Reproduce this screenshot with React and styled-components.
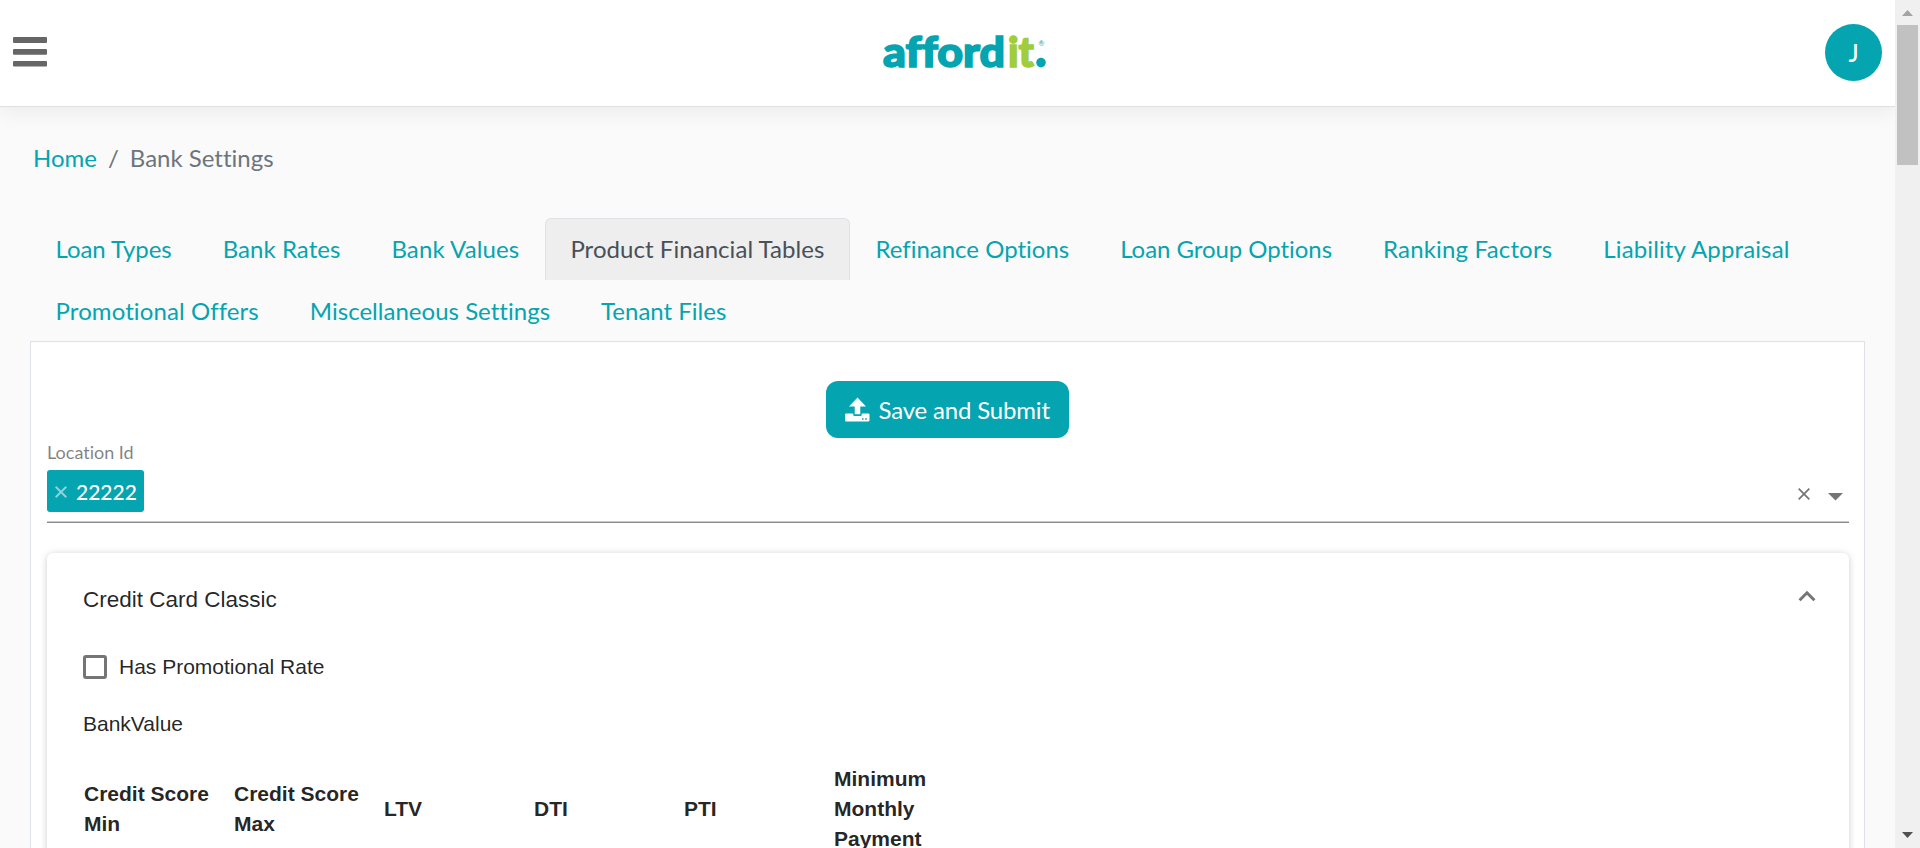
import React from "react";
import styled, { createGlobalStyle } from "styled-components";

const teal = "#04a4b0";

const Global = createGlobalStyle`
  *, *::before, *::after { box-sizing: border-box; }
  body {
    margin: 0;
    background: #fafafa;
    font-family: Lato, "Liberation Sans", sans-serif;
    font-size: 24px;
    line-height: 36px;
    font-variant-ligatures: none;
  }
`;

const Screen = styled.div`
  display: flex;
  height: 848px;
  overflow: hidden;
`;
const Page = styled.div`
  width: 1895px;
  height: 848px;
  overflow: hidden;
`;
const Header = styled.header`
  display: flex;
  align-items: flex-start;
  justify-content: space-between;
  height: 107px;
  padding: 0 13px;
  background: #fff;
  border-bottom: 1px solid #dfdfdf;
  box-shadow: 0 6px 18px rgba(0, 0, 0, 0.06);
`;
const MenuButton = styled.div`
  display: flex;
  width: 57px;
  padding-top: 37px;
`;
const Logo = styled.div`
  display: flex;
  width: 172px;
  height: 50px;
  margin: 24px 0 0 36px;
  svg { overflow: visible; }
`;
const Avatar = styled.div`
  width: 57px;
  height: 57px;
  margin-top: 24px;
  border-radius: 50%;
  background: ${teal};
  color: #fff;
  font-weight: 500;
  line-height: 58px;
  text-align: center;
`;
const Breadcrumb = styled.nav`
  display: flex;
  gap: 11px;
  margin: 33px 0 42px 33px;
  height: 36px;
  color: #6c757d;
  line-height: 36px;
`;
const Link = styled.a`
  color: ${teal};
`;
const Tabs = styled.div`
  display: flex;
  flex-wrap: wrap;
  margin: 0 30px;
  height: 123px;
`;
const Tab = styled.div`
  height: 62px;
  padding: 12px 24.5px;
  border: 1px solid ${(p) => (p.$active ? "#dee2e6" : "transparent")};
  border-bottom: 0;
  border-radius: 6px 6px 0 0;
  background: ${(p) => (p.$active ? "#eee" : "transparent")};
  color: ${(p) => (p.$active ? "#495057" : teal)};
  letter-spacing: ${(p) => p.$tracking}px;
  white-space: nowrap;
`;
const Panel = styled.section`
  display: flex;
  flex-direction: column;
  width: 1835px;
  height: 640px;
  margin-left: 30px;
  padding: 39px 15px 0 16px;
  border: 1px solid #dee2e6;
  background: #fff;
`;
const SubmitButton = styled.button`
  display: flex;
  align-items: center;
  align-self: center;
  gap: 9px;
  width: 243px;
  height: 57px;
  margin-right: 2px;
  padding: 0 0 0 19px;
  border: 0;
  border-radius: 12px;
  background: ${teal};
  color: #fff;
  font: 24px/36px Lato, sans-serif;
  letter-spacing: -0.18px;
  white-space: nowrap;
`;
const FieldLabel = styled.div`
  height: 27px;
  margin: 1px 0 4px;
  color: rgba(0, 0, 0, 0.5);
  font-size: 18px;
  line-height: 27px;
`;
const Select = styled.div`
  display: flex;
  justify-content: space-between;
  height: 53px;
  border-bottom: 1px solid #8c8c8c;
  box-shadow: inset 0 -1px #c9c9c9;
`;
const Chip = styled.div`
  display: flex;
  align-items: center;
  gap: 9px;
  width: 97px;
  height: 42px;
  padding: 2px 0 0 8px;
  border-radius: 3px;
  background: ${teal};
  color: #fff;
  font-size: 21px;
  font-weight: 500;
  line-height: 42px;
`;
const SelectIcons = styled.div`
  display: flex;
  gap: 18px;
  padding: 18px 6px 0 0;
`;
const Card = styled.article`
  height: 400px;
  margin-top: 30px;
  padding: 0 33px 0 36px;
  border-radius: 6px;
  background: #fff;
  box-shadow: 0 3px 1.5px -1.5px rgba(0, 0, 0, 0.1), 0 1px 7px rgba(0, 0, 0, 0.2);
  color: rgba(0, 0, 0, 0.87);
  font-family: "Liberation Sans", sans-serif;
  font-size: 21px;
  line-height: 30px;
`;
const CardHeader = styled.div`
  display: flex;
  justify-content: space-between;
  padding-top: 32px;
  height: 102px;
  font-size: 22.5px;
`;
const CheckRow = styled.label`
  display: flex;
  gap: 12px;
  height: 24px;
  line-height: 24px;
`;
const CheckBox = styled.span`
  width: 24px;
  height: 24px;
  border: 3px solid #757575;
  border-radius: 3px;
`;
const SectionTitle = styled.div`
  margin-top: 30px;
  height: 30px;
`;
const TableHead = styled.div`
  display: grid;
  grid-template-columns: repeat(6, 150px);
  align-items: center;
  height: 90px;
  margin: 25px 0 0 1px;
  font-weight: 700;
`;
const HeadCell = styled.div`
  padding-right: 20px;
`;
const Scrollbar = styled.div`
  display: flex;
  flex-direction: column;
  align-items: center;
  justify-content: space-between;
  width: 25px;
  height: 848px;
  padding: 10px 0;
  background: #f0f0f0;
`;
const Thumb = styled.div`
  width: 21px;
  height: 140px;
  margin: 9px 0 auto;
  background: #c1c1c1;
`;

const Cross = ({ size, color, width }) => (
  <svg width={size} height={size} viewBox="0 0 12 12">
    <path d="M.7.7l10.6 10.6M11.3.7L.7 11.3" stroke={color} strokeWidth={width} />
  </svg>
);

const tabs = [
  ["Loan Types", -0.06],
  ["Bank Rates", 0.05],
  ["Bank Values", 0.12],
  ["Product Financial Tables", 0.05],
  ["Refinance Options", 0],
  ["Loan Group Options", -0.05],
  ["Ranking Factors", 0.18],
  ["Liability Appraisal", 0.13],
  ["Promotional Offers", 0.1],
  ["Miscellaneous Settings", 0.02],
  ["Tenant Files", 0],
];
const columns = ["Credit Score Min", "Credit Score Max", "LTV", "DTI", "PTI", "Minimum Monthly Payment"];

export default function App() {
  return (
    <Screen>
      <Global />
      <Page>
        <Header>
          <MenuButton>
            <svg width="34" height="30" viewBox="0 0 34 30" fill="#666">
              <rect width="34" height="6" rx="1" />
              <rect y="12" width="34" height="5.7" rx="1" />
              <rect y="24" width="34" height="5.4" rx="1" />
            </svg>
          </MenuButton>
          <Logo>
            <svg width="172" height="50" viewBox="0 0 172 50" fontFamily="Lato" fontWeight="900" fontSize="42">
              <text x="3" y="42.5" fill={teal} stroke={teal} strokeWidth="1.6" textLength="122" lengthAdjust="spacingAndGlyphs">afford</text>
              <text x="128" y="42.5" fill="#a0cd3c" stroke="#a0cd3c" strokeWidth="1.6" textLength="26" lengthAdjust="spacingAndGlyphs">it</text>
              <circle cx="161" cy="38.6" r="4.8" fill={teal} />
              <text x="158.4" y="22" fill={teal} fontSize="7" fontWeight="400">®</text>
            </svg>
          </Logo>
          <Avatar>J</Avatar>
        </Header>
        <Breadcrumb>
          <Link>Home</Link>
          <span>/</span>
          <span>Bank Settings</span>
        </Breadcrumb>
        <Tabs>
          {tabs.map(([label, tracking]) => (
            <Tab key={label} $tracking={tracking} $active={label === "Product Financial Tables"}>{label}</Tab>
          ))}
        </Tabs>
        <Panel>
          <SubmitButton>
            <svg width="25" height="25" viewBox="0 0 25 25" fill="#fff">
              <path d="M12.5 0.5L21 9.4H15.3V17.2H9.7V9.4H4Z" />
              <path fillRule="evenodd" d="M1.2 16.5H8.2V17.5Q8.2 19 9.7 19H15.3Q16.8 19 16.8 17.5V16.5H23.3Q24.5 16.5 24.5 17.7V23.3Q24.5 24.5 23.3 24.5H1.2Q0 24.5 0 23.3V17.7Q0 16.5 1.2 16.5ZM17 21.2V22.8H18.6V21.2ZM20.2 21.2V22.8H21.8V21.2Z" />
            </svg>
            <span>Save and Submit</span>
          </SubmitButton>
          <FieldLabel>Location Id</FieldLabel>
          <Select>
            <Chip>
              <Cross size={12} color="#8cd3d9" width={2} />
              <span>22222</span>
            </Chip>
            <SelectIcons>
              <Cross size={12} color="#757575" width={1.7} />
              <svg width="15" height="16" viewBox="0 0 15 16"><path d="M0 5H15L7.5 12.5Z" fill="#757575" /></svg>
            </SelectIcons>
          </Select>
          <Card>
            <CardHeader>
              <span>Credit Card Classic</span>
              <svg width="18" height="24" viewBox="0 0 18 24"><path d="M1.6 15.2L9 7.8L16.4 15.2" fill="none" stroke="#757575" strokeWidth="3" /></svg>
            </CardHeader>
            <CheckRow><CheckBox /><span>Has Promotional Rate</span></CheckRow>
            <SectionTitle>BankValue</SectionTitle>
            <TableHead>
              {columns.map((c) => <HeadCell key={c}>{c}</HeadCell>)}
            </TableHead>
          </Card>
        </Panel>
      </Page>
      <Scrollbar>
        <svg width="11" height="6" viewBox="0 0 11 6"><path d="M0 6L5.5 0L11 6Z" fill="#a3a3a3" /></svg>
        <Thumb />
        <svg width="11" height="6" viewBox="0 0 11 6"><path d="M0 0H11L5.5 6Z" fill="#505050" /></svg>
      </Scrollbar>
    </Screen>
  );
}
